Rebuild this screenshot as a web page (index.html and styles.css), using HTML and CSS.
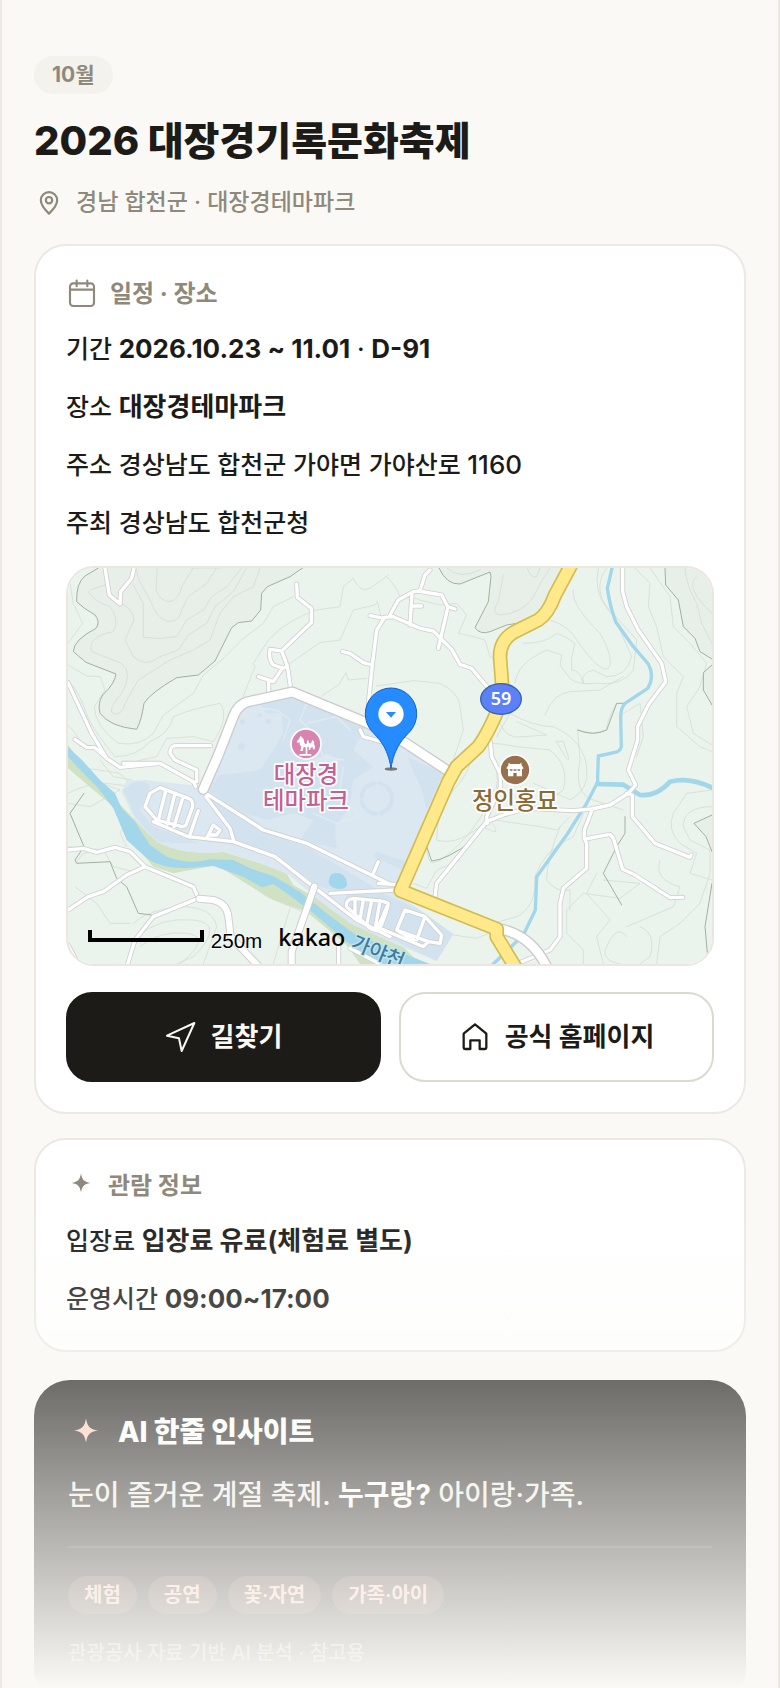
FILE: index.html
```html
<!DOCTYPE html>
<html lang="ko">
<head>
    <meta charset="UTF-8">
    <meta name="viewport" content="width=device-width, initial-scale=1.0">
    <title>2026 대장경기록문화축제</title>
    <link rel="stylesheet" href="styles.css">
</head>
<body>

    <main class="page">
        <header class="head">
            <span class="month">10월</span>
            <h1><span class="num">2026</span> 대장경기록문화축제</h1>
            <p class="place">
                <svg class="icon-pin" viewBox="0 0 24 24" fill="none" stroke="currentColor" stroke-width="1.9" stroke-linejoin="round">
                    <path d="M12 22c-2.600-2.500-7-6.700-7-11.500a7 7 0 0 1 14 0c0 4.800-4.400 9-7 11.500z"></path>
                    <circle cx="12" cy="10.400" r="2.700"></circle>
                </svg>
                경남 합천군 · 대장경테마파크
            </p>
        </header>

        <section class="card card-place">
            <h2>
                <svg class="icon-calendar" viewBox="0 0 24 24" fill="none" stroke="currentColor" stroke-width="1.6" stroke-linecap="round">
                    <rect x="3" y="4" width="18" height="17" rx="2.500"></rect>
                    <path d="M3 8.700h18M8 2v4.200M16 2v4.200"></path>
                </svg>
                일정 · 장소
            </h2>
            <p>기간 <strong>2026.10.23 ~ 11.01</strong> · <strong>D-91</strong></p>
            <p>장소 <strong>대장경테마파크</strong></p>
            <p>주소 경상남도 합천군 가야면 가야산로 <span class="num">1160</span></p>
            <p>주최 경상남도 합천군청</p>

            <div class="map">
                <svg viewBox="24 24 1932 1188" role="img" aria-label="대장경테마파크 지도">
                    <defs>
                        <g id="roads">
                            <path d="M135 24L148 105L180 132L182 95L215 55L222 24M710 72L712 112L754 145V188L665 273L630 268Q625 300 640 315L670 325L682 318L665 273M682 318L692 385M665 328L640 365L595 350M626 365V400"></path>
                            <path d="M848 275L870 280L910 308L937 315L925 430M937 315L950 210L972 175L930 167M972 172L1000 170L1080 205L1120 213L1175 268L1200 313L1235 325L1285 385L1320 400M990 165L1015 120L1060 95L1080 93L1095 45L1110 30M1075 93L1145 105L1163 140L1185 147M1163 145L1135 265M1056 100L1050 195M1056 138H1085"></path>
                            <path d="M1688 20V95L1700 140L1735 210L1805 310L1817 365L1765 435L1733 500V540L1705 630L1727 675L1705 700L1650 735L1595 747L1540 752L1400 745L1330 765L1280 785L1130 970L1125 1010M1291 545L1295 590L1320 640L1322 680L1280 770L1282 790"></path>
                            <path d="M1598 745L1573 810V835L1580 850V925L1510 985L1500 1030V1130L1470 1170L1370 1212M1575 837L1650 823L1660 835L1688 928L1725 945L1830 1013L1868 1012M1700 700L1717 705V770L1785 850L1890 892L1893 885"></path>
                            <path d="M24 368L95 520L140 595L180 622L300 610L400 665L407 680M45 538L80 562L105 563L135 590M190 610L300 610M452 557H345Q330 560 330 580L345 600L410 630V665M900 510L910 530L1000 555"></path>
                            <path d="M24 870L70 865L110 877L165 862L210 875L255 920L400 980L415 1015L280 1070L225 1140L203 1212M255 920L200 945L130 995L85 1010L24 1050M24 1155L55 1212M836 1160V1212M870 1165L960 1212"></path>
                            <path d="M438 700L610 810L740 850L990 973M438 710L510 805L522 845M280 785L385 830L520 845L645 890L760 980L890 1080L990 1130M955 905L940 940M810 1000L1005 990M955 970L1030 975"></path>
                            <path d="M300 683L385 715Q400 720 398 740L378 795Q370 803 360 798L290 780M300 683L270 700L255 740L290 780M318 690L295 780M345 700L322 792M370 708L342 800M415 752L388 830M440 835L460 795L480 810L470 825L450 825"></path>
                            <path d="M970 1024L880 1015Q855 1020 860 1040L930 1105L950 1112L985 1030zM885 1015V1060M910 1020L900 1080M935 1022L920 1095M960 1022L945 1110M985 1030Q980 1060 960 1105L1090 1160L1105 1145L1140 1150L1145 1125L1095 1070L1035 1050L1010 1110L1060 1140M1095 1070L1070 1140M1010 1110L1105 1145"></path>
                        </g>
                        <path id="bypass" d="M430 688L475 585L520 470Q535 430 570 424L697 396L920 488L1035 548L1160 630M1310 1105Q1410 1120 1460 1220"></path>
                        <path id="bridge" d="M418 1016L460 1020Q500 1030 505 1070L512 1130L540 1160L595 1218M763 980L695 1175V1218"></path>
                        <path id="route59" d="M1536 10L1485 105Q1465 160 1435 180L1365 215Q1320 240 1320 290L1326 370Q1325 410 1322 430Q1285 520 1255 560L1190 620L1165 665L1022 992L1310 1107V1130L1365 1220"></path>
                    </defs>

                    <rect class="land" x="24" y="24" width="1932" height="1188"></rect>

                    <!-- high ground -->
                    <path class="hill" d="M115 24L75 48Q48 70 50 125Q70 145 105 165Q122 185 108 205Q40 240 40 275L78 307L168 342Q165 370 128 405Q112 430 120 460Q150 500 230 508Q245 480 252 430Q270 400 350 353L415 345L465 303L515 203L535 188L575 183L602 150L605 100L622 80L690 50L728 24z"></path>
                    <path class="hill" d="M1137 24Q1160 75 1200 72L1290 36L1293 50L1285 125L1245 203Q1260 225 1290 215L1340 195Q1400 190 1455 145L1530 24z"></path>
                    <path class="hill" d="M1815 24L1817 75L1855 120L1870 200L1905 235L1920 275L1956 297V24z"></path>
                    <path class="hill" d="M1956 315L1930 338V390L1956 435z"></path>
                    <path class="hill" d="M1956 765L1902 790L1938 830L1956 875z"></path>

                    <!-- contour lines -->
                    <g class="contour">
                        <path d="M85 95Q110 130 150 140Q180 180 160 215Q80 230 95 275Q160 300 185 310Q220 340 185 400Q140 450 160 462Q190 465 195 430L235 360L330 300L400 270L450 240L480 160L520 110L580 80L600 24"></path>
                        <path d="M135 75L90 90M185 130Q220 150 222 180L195 240L220 290Q260 325 300 290L355 270L385 225L440 190L465 140L520 95L560 24"></path>
                        <path d="M220 75L250 130V232Q300 240 350 230L380 180L430 150L455 110L500 80L545 24"></path>
                        <path d="M227 24L237 60L275 130Q290 175 325 185Q360 185 365 150L385 110L440 70L470 24"></path>
                        <path d="M292 24L288 90Q300 125 330 125Q360 115 365 80L400 24M395 24L480 24"></path>
                        <path d="M30 70L40 130L68 190L24 250M24 315L80 348L120 350L135 390L103 440Q105 500 175 550Q240 560 280 520L310 465L400 400L430 345L485 300L550 235L610 190L640 140L700 110"></path>
                        <path d="M24 360Q60 400 75 450T165 590Q230 590 270 545Q330 520 340 470Q400 445 480 430Q510 470 460 545L400 530L320 535L290 590L200 610"></path>
                        <path d="M548 412L585 320L580 310L625 240Q680 180 770 150L840 140L850 80L880 55Q900 100 930 85L985 45"></path>
                        <path d="M690 310L780 248L840 240L880 150L945 135L952 125L965 180M788 406L835 375L858 338L865 360L920 355M950 378L1060 362L1140 370Q1200 400 1200 440L1210 510L1180 600"></path>
                        <path d="M980 50Q1010 80 1020 110Q1060 110 1080 120L1140 135L1190 130L1220 165L1195 220L1240 230L1275 240L1290 290L1340 310"></path>
                        <path d="M1330 45L1315 125Q1290 160 1320 165Q1390 160 1420 110Q1440 70 1470 24M1402 24Q1410 55 1430 50L1440 24M1160 24Q1200 60 1260 30"></path>
                        <path d="M1390 250Q1460 250 1490 220Q1520 230 1545 250L1535 290L1535 330Q1560 330 1570 370Q1560 340 1600 330L1640 350Q1700 350 1715 290Q1680 210 1660 170Q1590 90 1640 24"></path>
                        <path d="M1365 370Q1370 310 1460 270L1505 285L1500 315L1530 355Q1550 375 1600 370Q1690 380 1720 330L1730 240L1640 140Q1600 100 1615 24"></path>
                        <path d="M1470 180Q1530 200 1550 240Q1620 340 1645 325Q1665 300 1620 220Q1530 130 1540 90"></path>
                        <path d="M1725 24L1770 70L1765 140L1790 200L1810 290L1870 350L1850 400V500L1920 560L1956 575"></path>
                        <path d="M1770 24L1830 110L1840 200L1890 250L1940 310L1920 380L1880 440L1900 520L1956 555"></path>
                        <path d="M1875 24Q1880 80 1910 130L1925 190L1956 250M1910 50Q1870 80 1956 160M1905 24L1956 60"></path>
                        <path d="M1690 460L1740 430L1750 530L1730 590M1670 430Q1640 480 1640 510L1600 520L1553 510L1560 600Q1540 700 1600 720L1690 750"></path>
                        <path d="M1455 465Q1480 400 1530 395L1620 390L1690 350M1320 490Q1340 540 1390 530L1460 525L1370 485M1490 545Q1530 620 1525 590L1510 545z"></path>
                        <path d="M1310 530L1350 460Q1420 500 1480 500Q1570 540 1580 620Q1590 690 1530 720L1490 700L1420 670"></path>
                        <path d="M1240 560Q1280 540 1370 560L1470 570Q1530 620 1510 690L1470 720"></path>
                        <path d="M1310 620Q1320 700 1280 780Q1200 860 1130 840Q1130 750 1180 690Q1220 650 1230 610"></path>
                        <path d="M1300 690Q1270 780 1200 850Q1130 920 1110 905Q1090 860 1110 830M1290 780Q1320 820 1300 815L1270 800M1305 780L1440 800L1490 810L1530 770"></path>
                        <path d="M1570 760L1540 830Q1450 870 1425 950Q1430 1040 1370 1070L1300 1090M1500 800Q1460 900 1460 960Q1490 1000 1530 990V1050"></path>
                        <path d="M1956 690L1880 700L1840 760Q1820 810 1860 850L1910 880L1890 940L1956 960M1956 740Q1870 740 1870 800L1890 840L1950 870V940L1920 1030L1860 1090L1800 1130L1790 1212"></path>
                        <path d="M1630 960L1740 970L1680 1015L1570 1000L1520 1050V1120L1570 1170V1212M1610 940L1580 1000L1650 1080L1610 1130L1630 1212"></path>
                        <path d="M1700 1130Q1670 1090 1640 1160Q1620 1200 1680 1212M1740 1100Q1790 1120 1770 1190L1740 1212M1800 900Q1780 960 1860 980L1840 1040L1700 1100"></path>
                        <path d="M24 700Q80 670 140 670L220 680L180 640L50 620M24 730L90 740L180 690L70 650M24 495Q70 540 60 560"></path>
                        <path d="M24 860L130 870L160 920L220 935M45 980L110 1030L150 1090L210 1090M50 905L70 880L150 870"></path>
                        <path d="M120 600L160 650L215 660M230 1130Q300 1070 400 1080T400 1190L350 1212M240 1160Q300 1110 380 1120T360 1212M220 1090Q260 1050 360 1040Q460 1040 470 1100L430 1212"></path>
                        <path d="M690 1045L670 1110L640 1212M550 960L620 1010L740 1060M215 755L180 820L200 860"></path>
                        <path d="M1180 1125L1250 1135L1310 1110M1060 970L1100 985L1130 930L1200 900"></path>
                    </g>
                    <g class="contour-index">
                        <path d="M115 24L75 48Q48 70 50 125Q70 145 105 165Q122 185 108 205Q40 240 40 275L78 307L168 342Q165 370 128 405Q112 430 120 460Q150 500 230 508Q245 480 252 430Q270 400 350 353L415 345L465 303L515 203L535 188L575 183L602 150L605 100L622 80L690 50L728 24"></path>
                        <path d="M1137 24Q1160 75 1200 72L1290 36L1293 50L1285 125L1245 203Q1260 225 1290 215L1340 195Q1400 190 1455 145"></path>
                        <path d="M1815 24L1817 75L1855 120L1870 200L1905 235L1920 275L1956 297M1956 315L1930 338V390L1956 435"></path>
                        <path d="M1956 765L1902 790L1938 830L1956 875M1956 970L1935 1100L1945 1212"></path>
                        <path d="M1553 510Q1600 530 1640 510L1670 430L1690 430M1100 860L1115 903Q1160 900 1240 840L1290 780M1695 770V820L1670 860L1630 940L1685 1035"></path>
                        <path d="M72 700L30 760L72 860L45 900L50 910L150 905L170 955L200 980L235 1060L275 1065"></path>
                    </g>

                    <!-- river banks and park ground -->
                    <path class="bank" d="M24 555L90 640L225 780L290 845Q380 890 490 875L600 910L680 940L700 975L770 1015L830 1060L1000 1130L1080 1212H900L860 1155L740 1055L640 1020L550 965L470 915L340 940L280 920L225 855L160 740L24 625z"></path>
                    <path class="park" d="M697 412L550 440L525 480L435 680L255 660L200 662L185 695L225 780L290 845Q380 890 490 875L600 910L680 940L770 1015L870 1090L1000 1150L1130 1203L1180 1122L1080 1050L1005 1000L1160 650L1020 555L920 510z"></path>
                    <path class="park-dark" d="M697 412L600 432L620 460L665 460L668 520L640 570L600 630L480 645L440 690L620 800L740 845L830 865L825 800L870 740L880 660L940 620L880 570L915 505zM225 665Q260 660 270 680L240 750L280 800L420 850L360 850L290 845L225 770L190 690z"></path>
                    <path class="park-dark" d="M1040 590L1150 640L1100 750L1085 690zM950 875L1040 905L1030 930L940 890zM500 850L640 890L780 980L860 1000L850 1040L980 1130L1130 1203L1180 1122L1080 1050L990 1010L740 860L650 830L500 720L440 700L520 840z"></path>
                    <path class="park-light" d="M670 600Q740 620 800 580L840 600Q780 650 700 640zM560 760L620 780L700 760L760 780L720 840L620 800z"></path>
                    <g class="park-dot">
                        <circle cx="547" cy="486" r="8"></circle>
                        <circle cx="625" cy="484" r="8"></circle>
                        <circle cx="599" cy="466" r="6"></circle>
                        <circle cx="544" cy="560" r="11"></circle>
                    </g>
                    <circle class="park-ring" cx="950" cy="715" r="46"></circle>
                    <path class="park-path" d="M740 430L720 480L760 520L790 590L850 600M600 445L650 450L690 480L670 540M740 490L830 470L870 510M760 760L830 790L900 770L840 690L850 620"></path>

                    <!-- water -->
                    <path class="water" d="M24 562L66 600L120 660L165 700L185 745L225 785L270 855L320 890Q390 915 450 898L520 900L570 925L640 948L720 995L800 1060L880 1120L990 1165L1110 1212H960L860 1145L760 1060L680 1000L640 972L605 982L550 950L460 918L380 924Q290 925 250 885L200 840L160 745L115 685L70 640L24 590z"></path>
                    <path class="water" d="M808 955Q812 935 840 940Q862 950 861 975Q855 990 830 986Q800 980 808 955z"></path>
                    <path class="stream" d="M1657 20L1642 85Q1650 140 1667 185L1720 260L1765 312Q1785 350 1763 385L1695 430Q1682 445 1682 470L1684 560Q1680 575 1665 577L1615 588L1613 650V670"></path>
                    <path class="stream" d="M1612 668L1580 730L1520 825L1430 950L1426 1050L1390 1125L1300 1212"></path>
                    <path class="stream-wide" d="M1612 672L1690 674L1740 705Q1790 710 1830 665Q1890 650 1960 685"></path>

                    <!-- roads, casing first -->
                    <use class="road-case" href="#roads"></use>
                    <use class="road" href="#roads"></use>
                    <use class="mid-case" href="#bridge"></use>
                    <use class="mid" href="#bridge"></use>
                    <use class="wide-case" href="#bypass"></use>
                    <use class="wide" href="#bypass"></use>
                    <use class="highway-case" href="#route59"></use>
                    <use class="highway" href="#route59"></use>

                    <!-- route number -->
                    <ellipse class="route" cx="1323" cy="417" rx="61" ry="46"></ellipse>
                    <text class="route-text" x="1323" y="436">59</text>

                    <!-- theme park -->
                    <circle class="spot spot-park" cx="738" cy="552" r="45"></circle>
                    <path class="spot-glyph" d="M722 527l4 5 5 6 2 10 3 4h4l1-11h4l2 9h6l4-10 6 5-1 7 3 7-1 9h-5l-1-7-6 2-2 7h-4l1-8-5-2v22h12v5h-36v-5h19v-20l-6-1-3 12h-7l3-13-5-6v-8l-5 3-4-4 7-9z"></path>
                    <text class="label label-park" x="738" y="668">대장경</text>
                    <text class="label label-park" x="738" y="748">테마파크</text>

                    <!-- shrine -->
                    <circle class="spot spot-shrine" cx="1365" cy="630" r="45"></circle>
                    <path class="spot-glyph" d="M1346 608l5 4h28l5-4 1 8 6 9-5 3v21h-16v-10h-10v10h-16v-21l-5-3 6-9z"></path>
                    <path class="spot-detail" d="M1351 630h5M1362 630h6M1374 630h5"></path>
                    <text class="label label-shrine" x="1365" y="746">정인홍묘</text>

                    <text class="river-name" transform="translate(870 1164) rotate(22)">가야천</text>

                    <!-- scale and logo -->
                    <path class="scale" d="M90 1110v30h336v-30"></path>
                    <text class="scale-text" x="452" y="1163">250m</text>
                    <text class="logo" x="655" y="1157">kakao</text>

                    <!-- marker -->
                    <ellipse class="marker-shadow" cx="993" cy="627" rx="19" ry="5"></ellipse>
                    <path class="marker" d="M993 624C983 560 955 535 934 512Q916 490 916 461A77 77 0 0 1 1070 461Q1070 490 1052 512C1031 535 1003 560 993 624z"></path>
                    <circle class="marker-dot" cx="993" cy="462" r="38"></circle>
                    <path class="marker-arrow" d="M978 456h30l-15 17z"></path>
                </svg>
            </div>

            <div class="actions">
                <a class="btn btn-dark" href="#route">
                    <svg viewBox="0 0 24 24" fill="none" stroke="currentColor" stroke-width="1.5" stroke-linejoin="round">
                        <path d="M22 1.500L12.500 22.500l-2-9.500L1.500 11z"></path>
                    </svg>
                    길찾기
                </a>
                <a class="btn" href="#homepage">
                    <svg viewBox="0 0 24 24" fill="none" stroke="currentColor" stroke-width="1.7" stroke-linejoin="round">
                        <path d="M3.500 9.500L12 2.500l8.500 7v10.500a1 1 0 0 1-1 1h-4v-6.500h-7v6.500h-4a1 1 0 0 1-1-1z"></path>
                    </svg>
                    공식 홈페이지
                </a>
            </div>
        </section>

        <section class="card">
            <h2>
                <svg class="icon-star" viewBox="0 0 24 24" fill="currentColor">
                    <path d="M12 2c1 5.200 2.300 6.500 7.500 7.500c-5.200 1-6.500 2.300-7.500 7.500c-1-5.200-2.300-6.500-7.500-7.500c5.200-1 6.500-2.300 7.500-7.500z"></path>
                </svg>
                관람 정보
            </h2>
            <p>입장료 <strong>입장료 유료(체험료 별도)</strong></p>
            <p>운영시간 <strong>09:00~17:00</strong></p>
        </section>

        <section class="insight">
            <h2>
                <svg viewBox="0 0 24 24" fill="currentColor">
                    <path d="M12 3c1 5.500 2.500 7 8 8c-5.500 1-7 2.500-8 8c-1-5.500-2.500-7-8-8c5.500-1 7-2.500 8-8z"></path>
                </svg>
                AI 한줄 인사이트
            </h2>
            <p class="summary">눈이 즐거운 계절 축제. <strong>누구랑?</strong> 아이랑·가족.</p>
            <ul class="tags">
                <li>체험</li>
                <li>공연</li>
                <li>꽃·자연</li>
                <li>가족·아이</li>
            </ul>
            <p class="note">관광공사 자료 기반 AI 분석 · 참고용</p>
        </section>

        <div class="fade"></div>
    </main>

</body>
</html>
```

FILE: styles.css
```css
* {
    margin: 0;
    padding: 0;
    box-sizing: border-box;
}

body {
    background: #faf9f5;
    color: #1c1b17;
    font-family: Inter, "Noto Sans CJK KR", sans-serif;
    font-size: 25px;
    font-weight: 500;
}

.page {
    position: relative;
    height: 100vh;
    overflow: hidden;
    padding: 56px 32px 0;
    border-left: 2px solid #ebe9e2;
    border-right: 2px solid #ebe9e2;
}

/* header */
.month {
    display: inline-block;
    padding: 0 18px;
    border-radius: 19px;
    background: #f3f2ed;
    color: #8f897c;
    font-size: 21px;
    font-weight: 700;
    line-height: 38px;
    vertical-align: top;
}

h1 {
    margin-top: 22px;
    font-size: 39px;
    font-weight: 800;
    line-height: 50px;
}

h1 .num {
    font-size: 40px;
}

.place {
    display: flex;
    align-items: center;
    gap: 12px;
    margin-top: 18px;
    color: #8f897c;
    font-size: 23px;
    line-height: 36px;
}

.icon-pin {
    width: 30px;
    height: 28px;
}

/* cards */
.card {
    margin-top: 24px;
    padding: 28px 30px 30px;
    border: 2px solid #ebe9e2;
    border-radius: 32px;
    background: #fff;
}

.card-place {
    padding-top: 30px;
}

.card h2 {
    display: flex;
    align-items: center;
    gap: 12px;
    color: #8f897c;
    font-size: 24px;
    font-weight: 700;
    line-height: 36px;
}

.card p {
    margin-top: 16px;
    line-height: 42px;
}

.card strong,
.card .num {
    font-size: 26px;
}

.icon-calendar {
    width: 32px;
    height: 32px;
}

.icon-star {
    width: 30px;
    height: 30px;
}

.actions {
    display: grid;
    grid-template-columns: 1fr 1fr;
    gap: 18px;
    margin-top: 26px;
}

.btn {
    display: flex;
    align-items: center;
    justify-content: center;
    gap: 14px;
    height: 90px;
    border: 2px solid #dcdad0;
    border-radius: 26px;
    background: #fff;
    color: #1c1b17;
    font-size: 26px;
    font-weight: 700;
    line-height: 40px;
    text-decoration: none;
}

.btn-dark {
    border-color: #1c1b17;
    background: #1c1b17;
    color: #faf9f5;
}

.btn svg {
    width: 32px;
    height: 32px;
}

/* map */
.map {
    margin-top: 22px;
    border: 2px solid #ebe6df;
    border-radius: 28px;
    overflow: hidden;
}

.map svg {
    display: block;
    width: 100%;
    stroke-linecap: round;
    stroke-linejoin: round;
}

.land { fill: #ebf3ed; }
.hill { fill: #e8efe9; }
.bank { fill: #d0e2c3; }
.park { fill: #dce8f1; }
.park-dark { fill: #d2e3ef; }
.park-light { fill: #dce8f1; }
.park-dot { fill: #d2e3ef; }
.water { fill: #a2d6eb; }

.contour,
.contour-index,
.park-path,
.park-ring,
.stream,
.stream-wide,
.road-case,
.road,
.mid-case,
.mid,
.wide-case,
.wide,
.highway-case,
.highway,
.scale,
.spot-detail {
    fill: none;
}

.contour { stroke: #cfd9cf; stroke-width: 2; }
.contour-index { stroke: #a3b09d; stroke-width: 3; }
.park-path { stroke: #dfeaf3; stroke-width: 4; }
.park-ring { stroke: #d2e3ef; stroke-width: 12; stroke-dasharray: 60 14; }
.stream { stroke: #a2d6eb; stroke-width: 10; }
.stream-wide { stroke: #a2d6eb; stroke-width: 14; }
.road-case { stroke: #cfd0d0; stroke-width: 15; }
.road { stroke: #fff; stroke-width: 10; }
.mid-case { stroke: #cfd0d0; stroke-width: 24; }
.mid { stroke: #fff; stroke-width: 18; }
.wide-case { stroke: #cbcbcb; stroke-width: 34; }
.wide { stroke: #fff; stroke-width: 26; }
.highway-case { stroke: #d2bd50; stroke-width: 44; }
.highway { stroke: #ffe98b; stroke-width: 34; }

.route {
    fill: #5c80f5;
    stroke: #3563b0;
    stroke-width: 4;
}

.route-text {
    fill: #fff;
    font: 600 54px "Noto Sans", sans-serif;
    text-anchor: middle;
}

.spot {
    stroke: #fff;
    stroke-width: 5;
}

.spot-park { fill: #d784b0; }
.spot-shrine { fill: #99704c; }
.spot-glyph { fill: #fff; }
.spot-detail { stroke: #99704c; stroke-width: 4; }

.label,
.river-name {
    font-family: "Noto Sans CJK KR", sans-serif;
    font-size: 70px;
    font-weight: 500;
    stroke: #fff;
    stroke-width: 10;
    paint-order: stroke;
}

.label { text-anchor: middle; }
.label-park { fill: #c65f95; }
.label-shrine { fill: #8a6a35; }

.river-name {
    fill: #3f7c9a;
    font-size: 60px;
    stroke: #c4e6f3;
    stroke-width: 8;
}

.scale {
    stroke: #000;
    stroke-width: 12;
    stroke-linecap: butt;
    stroke-linejoin: miter;
}

.scale-text {
    font: 62px "Liberation Sans", sans-serif;
    stroke: #fff;
    stroke-width: 3;
    paint-order: stroke;
}

.logo {
    font: 500 70px "Noto Sans", sans-serif;
}

.marker {
    fill: #258bff;
    stroke: #1262c6;
    stroke-width: 3;
}

.marker-shadow { fill: #777; }
.marker-dot { fill: #fff; }
.marker-arrow { fill: #258bff; }

/* AI insight */
.insight {
    margin-top: 28px;
    padding: 32px 34px 36px;
    border-radius: 36px;
    background: #1c1b17;
    color: #f0efea;
}

.insight h2 {
    display: flex;
    align-items: center;
    gap: 14px;
    color: #fff;
    font-size: 28px;
    font-weight: 800;
    line-height: 40px;
}

.insight h2 svg {
    width: 36px;
    height: 36px;
    color: #ffcbb8;
}

.summary {
    margin-top: 20px;
    padding-bottom: 28px;
    border-bottom: 2px solid #393834;
    font-size: 28px;
    line-height: 46px;
}

.summary strong {
    color: #fff;
}

.tags {
    display: flex;
    gap: 11px;
    margin-top: 28px;
    list-style: none;
}

.tags li {
    padding: 0 16px;
    border-radius: 19px;
    background: #4a3630;
    color: #ffcbb8;
    font-size: 20px;
    font-weight: 600;
    line-height: 38px;
}

.note {
    margin-top: 24px;
    color: #a5a298;
    font-size: 20px;
    line-height: 30px;
}

/* covers the lower part of the page */
.fade {
    position: absolute;
    right: -2px;
    bottom: 0;
    left: -2px;
    height: 484px;
    background: linear-gradient(rgba(250, 249, 245, 0), #faf9f5);
}
```
